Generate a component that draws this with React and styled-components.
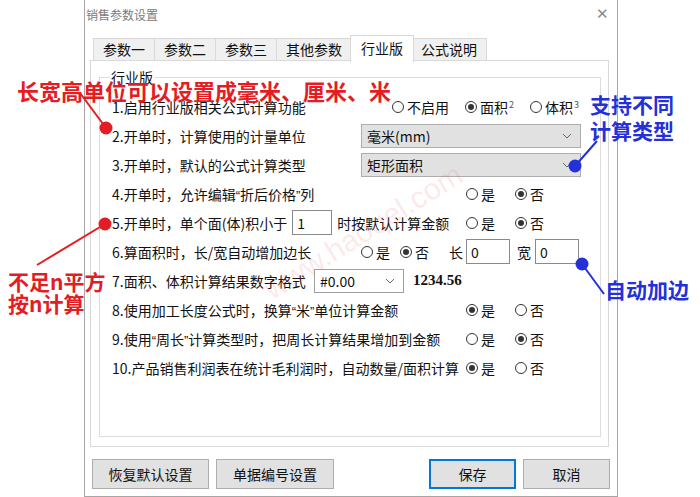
import React from 'react';
import styled, { createGlobalStyle } from 'styled-components';

const GlobalStyle = createGlobalStyle`
  html, body { margin: 0; padding: 0; background: #fff; }
  body { font-family: "Noto Sans CJK SC", "Noto Sans", sans-serif; color: #111; }
  * { box-sizing: border-box; }
`;

const RED = '#e41c23';
const BLUE = '#2430d8';

const tabs = [
  { name: '参数一' },
  { name: '参数二' },
  { name: '参数三' },
  { name: '其他参数' },
  { name: '行业版', active: true },
  { name: '公式说明' },
];

const Chevron = () => (
  <svg width="10" height="6" viewBox="0 0 10 6">
    <polyline points="1,1 5,5 9,1" fill="none" stroke="#666" strokeWidth="1" />
  </svg>
);

const Radio = ({ label, checked, sup }) => (
  <RadioItem>
    <Circle $checked={checked} />
    <span>{label}{sup && <Sup>{sup}</Sup>}</span>
  </RadioItem>
);

const YesNo = ({ yes }) => (
  <RadioGroup $gap={20}>
    <Radio label="是" checked={yes} />
    <Radio label="否" checked={!yes} />
  </RadioGroup>
);

export default function App() {
  return (
    <Page>
      <GlobalStyle />
      <Window>
        <TitleBar>
          <Title>销售参数设置</Title>
          <Close>✕</Close>
        </TitleBar>
        <Body>
          <TabStrip>
            {tabs.map(t => (
              <Tab key={t.name} $active={t.active}>{t.name}</Tab>
            ))}
          </TabStrip>
          <Panel>
            <Group>
              <Legend>行业版</Legend>
              <Row $split={280}>
                <span>1.启用行业版相关公式计算功能</span>
                <RadioGroup $gap={16}>
                  <Radio label="不启用" />
                  <Radio label="面积" sup="2" checked />
                  <Radio label="体积" sup="3" />
                </RadioGroup>
              </Row>
              <Row $split={249}>
                <span>2.开单时，计算使用的计量单位</span>
                <Select $w={220}>毫米(mm)<Chevron /></Select>
              </Row>
              <Row $split={249}>
                <span>3.开单时，默认的公式计算类型</span>
                <Select $w={220}>矩形面积<Chevron /></Select>
              </Row>
              <Row $split={354}>
                <span>4.开单时，允许编辑<Quote>“</Quote>折后价格<Quote>”</Quote>列</span>
                <YesNo />
              </Row>
              <Row $split={354}>
                <Inline>
                  5.开单时，单个面(体)积小于
                  <Input $w={40} $mx={5}>1</Input>
                  时按默认计算金额
                </Inline>
                <YesNo />
              </Row>
              <Row $split={249}>
                <span>6.算面积时，长/宽自动增加边长</span>
                <Inline>
                  <RadioGroup $gap={10}>
                    <Radio label="是" />
                    <Radio label="否" checked />
                  </RadioGroup>
                  <FieldLabel $ml={20}>长</FieldLabel>
                  <Input $w={44} $mx={3}>0</Input>
                  <FieldLabel $ml={4}>宽</FieldLabel>
                  <Input $w={44} $mx={4}>0</Input>
                </Inline>
              </Row>
              <Row $split={202}>
                <span>7.面积、体积计算结果数字格式</span>
                <Inline>
                  <Select $w={90} $white>#0.00<Chevron /></Select>
                  <Sample>1234.56</Sample>
                </Inline>
              </Row>
              <Row $split={354}>
                <span>8.使用加工长度公式时，换算<Quote>“</Quote>米<Quote>”</Quote>单位计算金额</span>
                <YesNo yes />
              </Row>
              <Row $split={354}>
                <span>9.使用<Quote>“</Quote>周长<Quote>”</Quote>计算类型时，把周长计算结果增加到金额</span>
                <YesNo />
              </Row>
              <Row $split={354}>
                <span>10.产品销售利润表在统计毛利润时，自动数量/面积计算</span>
                <YesNo yes />
              </Row>
            </Group>
          </Panel>
        </Body>
        <ButtonRow>
          <Button $w={117}>恢复默认设置</Button>
          <Button $w={118}>单据编号设置</Button>
          <Spacer />
          <Button $w={87} $primary>保存</Button>
          <Button $w={87}>取消</Button>
        </ButtonRow>
      </Window>

      <Watermark>www.haoqel.com</Watermark>

      <Callouts width="700" height="497" viewBox="0 0 700 497">
        <line x1="80" y1="93" x2="106" y2="128" stroke={RED} strokeWidth="2" />
        <circle cx="106" cy="128" r="6.5" fill={RED} />
        <line x1="37" y1="265" x2="105" y2="224" stroke={RED} strokeWidth="2" />
        <circle cx="105" cy="224" r="6.5" fill={RED} />
        <line x1="597" y1="141" x2="575" y2="166" stroke={BLUE} strokeWidth="2" />
        <circle cx="575" cy="166" r="6.5" fill={BLUE} />
        <line x1="582" y1="264" x2="604" y2="294" stroke={BLUE} strokeWidth="2" />
        <circle cx="582" cy="264" r="6.5" fill={BLUE} />
      </Callouts>

      <Note $x={17} $y={79} $color={RED} $size={22}>长宽高单位可以设置成毫米、厘米、米</Note>
      <Note $x={8} $y={270} $color={RED} $size={21}>不足n平方<br />按n计算</Note>
      <Note $x={590} $y={91} $color={BLUE} $size={21} $lh={26}>支持不同<br />计算类型</Note>
      <Note $x={605} $y={278} $color={BLUE} $size={21}>自动加边</Note>
    </Page>
  );
}

const Page = styled.div`
  position: relative;
  width: 700px;
  height: 497px;
  overflow: hidden;
  background: #fff;
`;

const Window = styled.div`
  margin-left: 84px;
  width: 534px;
  height: 497px;
  border: 1px solid #a6a6a6;
  border-top: none;
  display: flex;
  flex-direction: column;
  background: #fff;
`;

const TitleBar = styled.div`
  height: 28px;
  display: flex;
  align-items: center;
  justify-content: space-between;
  padding: 0 8px 0 1px;
`;

const Title = styled.span`
  font-size: 12px;
  color: #7b7b7b;
`;

const Close = styled.span`
  font-size: 15px;
  color: #8a8a8a;
  font-family: "DejaVu Sans", sans-serif;
  font-weight: 300;
`;

const Body = styled.div`
  padding: 0 8px 0 5px;
`;

const TabStrip = styled.div`
  display: flex;
  align-items: flex-end;
  height: 33px;
  padding-left: 3px;
  position: relative;
  z-index: 1;
`;

const Tab = styled.div`
  height: ${p => (p.$active ? 27 : 23)}px;
  padding: 0 ${p => (p.$active ? 10 : 9)}px;
  margin: 0 ${p => (p.$active ? -2 : 0)}px ${p => (p.$active ? -1 : 0)}px;
  margin-left: ${p => (p.$active ? -2 : -1)}px;
  border: 1px solid #d9d9d9;
  border-bottom: ${p => (p.$active ? 'none' : '1px solid #d9d9d9')};
  background: ${p => (p.$active ? '#fff' : '#f0f0f0')};
  font-size: 14px;
  line-height: ${p => (p.$active ? 24 : 21)}px;
  color: #111;
  position: relative;
  z-index: ${p => (p.$active ? 2 : 0)};
  &:first-child { margin-left: 0; }
`;

const Panel = styled.div`
  height: 387px;
  margin-top: -1px;
  border: 1px solid #d9d9d9;
  background: #fff;
  padding: 6px 7px 9px 8px;
  display: flex;
  flex-direction: column;
`;

const Group = styled.fieldset`
  flex: 1;
  margin: 0;
  min-width: 0;
  padding: 5px 10px 0 12px;
  border: 1px solid #dcdcdc;
`;

const Legend = styled.legend`
  font-size: 14px;
  line-height: 20px;
  padding: 0 1px;
  margin-left: -2px;
`;

const Row = styled.div`
  display: grid;
  grid-template-columns: ${p => p.$split}px auto;
  align-items: center;
  height: 29px;
  font-size: 14px;
  white-space: nowrap;
`;

const Quote = styled.span`
  font-family: "Liberation Sans", sans-serif;
  font-size: 13px;
`;

const Inline = styled.div`
  display: flex;
  align-items: center;
`;

const RadioGroup = styled.div`
  display: flex;
  align-items: center;
  gap: ${p => p.$gap}px;
`;

const RadioItem = styled.label`
  display: flex;
  align-items: center;
  gap: 3px;
  font-size: 14px;
`;

const Circle = styled.span`
  width: 12px;
  height: 12px;
  border-radius: 50%;
  border: 1px solid #333;
  display: inline-flex;
  align-items: center;
  justify-content: center;
  &::after {
    content: '';
    width: 6px;
    height: 6px;
    border-radius: 50%;
    background: ${p => (p.$checked ? '#333' : 'transparent')};
  }
`;

const Sup = styled.sup`
  font-size: 9px;
  color: #555;
  margin-left: 1px;
  vertical-align: 5px;
`;

const Select = styled.div`
  width: ${p => p.$w}px;
  height: 24px;
  display: flex;
  align-items: center;
  justify-content: space-between;
  padding: 0 8px 0 5px;
  font-size: 14px;
  background: ${p => (p.$white ? '#fff' : '#e1e1e1')};
  border: 1px solid ${p => (p.$white ? '#a0a0a0' : '#adadad')};
`;

const Input = styled.div`
  width: ${p => p.$w}px;
  height: 25px;
  margin: 0 ${p => p.$mx}px;
  padding-left: 4px;
  border: 1px solid #8a8a8a;
  display: flex;
  align-items: center;
  font-size: 14px;
  background: #fff;
`;

const FieldLabel = styled.span`
  margin-left: ${p => p.$ml}px;
`;

const Sample = styled.span`
  margin-left: 9px;
  font-family: "Liberation Serif", serif;
  font-weight: 700;
  font-size: 15px;
`;

const ButtonRow = styled.div`
  display: flex;
  gap: 8px;
  margin-top: 12px;
  padding: 0 7px;
`;

const Spacer = styled.div`
  flex: 1;
`;

const Button = styled.button`
  width: ${p => p.$w}px;
  height: 30px;
  font-family: "Noto Sans CJK SC", sans-serif;
  font-size: 14px;
  color: #111;
  background: #e1e1e1;
  border: ${p => (p.$primary ? '2px solid #0078d7' : '1px solid #adadad')};
  padding: 0;
  & + & { margin-left: ${p => (p.$primary ? 0 : -1)}px; }
`;

const Watermark = styled.div`
  position: absolute;
  left: 250px;
  top: 215px;
  transform: rotate(-32deg);
  font-family: "Liberation Sans", sans-serif;
  font-size: 30px;
  color: rgba(235, 90, 100, 0.14);
  pointer-events: none;
  white-space: nowrap;
`;

const Callouts = styled.svg`
  position: absolute;
  left: 0;
  top: 0;
  pointer-events: none;
`;

const Note = styled.div`
  position: absolute;
  left: ${p => p.$x}px;
  top: ${p => p.$y}px;
  color: ${p => p.$color};
  font-family: "Noto Sans CJK SC", sans-serif;
  font-weight: 700;
  font-size: ${p => p.$size}px;
  line-height: ${p => p.$lh || 22}px;
  white-space: nowrap;
`;
